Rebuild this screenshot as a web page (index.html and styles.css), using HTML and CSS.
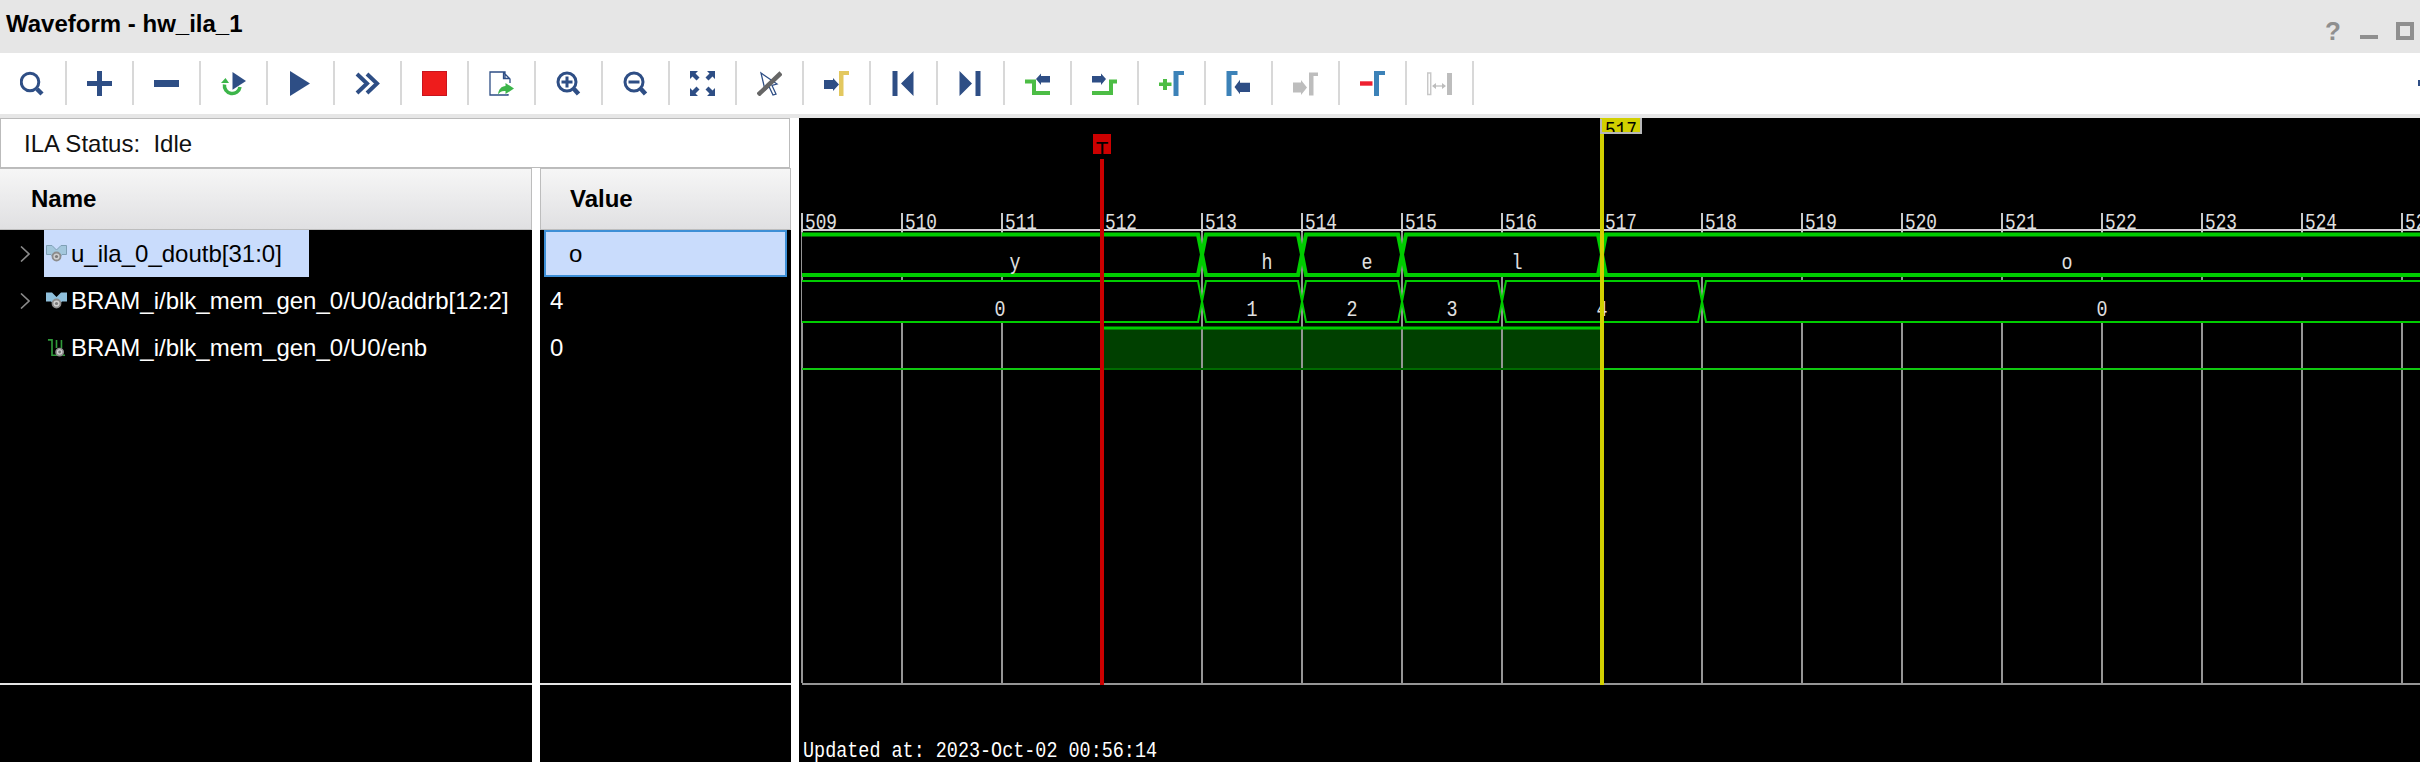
FILE: index.html
```html
<!doctype html>
<html lang="en-us">
  <head>
    <meta charset="utf-8">
    <title>Waveform - hw_ila_1</title>
    <link rel="stylesheet" href="styles.css">
  </head>
  <body>
	<div class="titlebar">
		<span class="title">Waveform - hw_ila_1</span>
		<div class="win-controls">
			<span class="win-help">?</span>
			<span class="win-min"></span>
			<span class="win-max"></span>
		</div>
	</div>

	<div class="toolbar">
		<div class="tool"><svg class="icon" viewBox="0 0 25 25"><circle class="line-blue" cx="10" cy="11" r="8.800"/><path class="line-blue thick" d="M17 18L22 23"/></svg></div>
		<div class="tool"><svg class="icon" viewBox="0 0 25 25"><path class="blue" d="M0 10H10V0H15V10H25V15H15V25H10V15H0z"/></svg></div>
		<div class="tool"><svg class="icon" viewBox="0 0 25 25"><rect class="blue" x="0" y="9" width="25" height="7"/></svg></div>
		<div class="tool"><svg class="icon" viewBox="0 0 25 25"><path class="blue" d="M11.500 1L25 10L11.500 18.700z"/><path class="line-green" d="M3.500 13.500A7.800 7.800 0 1 0 19 16"/><path class="green" d="M0 12L8 12L4.500 7z"/></svg></div>
		<div class="tool"><svg class="icon" viewBox="0 0 25 25"><path class="blue" d="M2 0V25L22 12.500z"/></svg></div>
		<div class="tool"><svg class="icon" viewBox="0 0 25 25"><path class="line-blue chevron" d="M2 3L12 12.500L2 22M12 3L22 12.500L12 22"/></svg></div>
		<div class="tool"><svg class="icon" viewBox="0 0 25 25"><rect class="stop" x="0.500" y="0.500" width="24" height="24"/></svg></div>
		<div class="tool"><svg class="icon" viewBox="0 0 25 25"><path class="line-blue thin" d="M16 7V1H1V24H19V23M14 1L21 8V12M14.500 1.500V7.500H21"/><path class="green" d="M16.500 12L25 17.500L16.500 23V20C12.500 19.500 10.500 21.500 9 23.500C9.500 18.500 12.500 15 16.500 15z"/></svg></div>
		<div class="tool"><svg class="icon" viewBox="0 0 25 25"><circle class="line-blue" cx="11" cy="11" r="9"/><path class="line-blue" d="M5.500 11H16.500M11 5.500V16.500"/><path class="line-blue thick" d="M18 18L22.500 23"/></svg></div>
		<div class="tool"><svg class="icon" viewBox="0 0 25 25"><circle class="line-blue" cx="11" cy="11" r="9"/><path class="line-blue" d="M5.500 11H16.500"/><path class="line-blue thick" d="M18 18L22.500 23"/></svg></div>
		<div class="tool"><svg class="icon" viewBox="0 0 25 25"><path class="blue" d="M0 0H8L5.500 2.500L9.500 6.500L6.500 9.500L2.500 5.500L0 8z"/><path class="blue" d="M25 0V8L22.500 5.500L18.500 9.500L15.500 6.500L19.500 2.500L17 0z"/><path class="blue" d="M25 25H17L19.500 22.500L15.500 18.500L18.500 15.500L22.500 19.500L25 17z"/><path class="blue" d="M0 25V17L2.500 19.500L6.500 15.500L9.500 18.500L5.500 22.500L8 25z"/></svg></div>
		<div class="tool"><svg class="icon" viewBox="0 0 25 25"><path class="line-blue thin" d="M4 2L20 13L15 14.500L19 23L16 24L12 15.500L8 19z"/><path class="line-grey" d="M1 24L24 2"/></svg></div>
		<div class="tool"><svg class="icon" viewBox="0 0 25 25"><path class="blue" d="M0 9H9V7L15 13.500L9 20V18H0z"/><path class="yellow" d="M15 0H25V4H19.500V25H15z"/></svg></div>
		<div class="tool"><svg class="icon" viewBox="0 0 25 25"><path class="blue" d="M1.500 0H6.500V25H1.500zM22.500 0V25L10 12.500z"/></svg></div>
		<div class="tool"><svg class="icon" viewBox="0 0 25 25"><path class="blue" d="M1.500 0V25L14 12.500zM17.500 0H22.500V25H17.500z"/></svg></div>
		<div class="tool"><svg class="icon" viewBox="0 0 25 25"><path class="blue" d="M11 8L16 2.500V5H25V11.500H16V14z"/><path class="line-edge" d="M0 10.500H9V22H25"/></svg></div>
		<div class="tool"><svg class="icon" viewBox="0 0 25 25"><path class="blue" d="M14 8L9 2.500V5H0V11.500H9V14z"/><path class="line-edge" d="M0 22H19V10.500H25"/></svg></div>
		<div class="tool"><svg class="icon" viewBox="0 0 25 25"><path class="edge" d="M4 8H8V11.500H12.500V15H8V19H4V15H0V11.500H4z"/><path class="flag" d="M14.500 0H25V4H19.500V25H14.500z"/></svg></div>
		<div class="tool"><svg class="icon" viewBox="0 0 25 25"><path class="flag" d="M0.500 0H11.500V4H5.500V25H0.500z"/><path class="blue" d="M8.500 16L14 8.700V11.700H24V21H14V23.300z"/></svg></div>
		<div class="tool"><svg class="icon" viewBox="0 0 25 25"><path class="off" d="M0 11.500H8V9L14 16.500L8 24V21.500H0z"/><path class="off" d="M16 1.500H25V5H20.500V24.500H16z"/></svg></div>
		<div class="tool"><svg class="icon" viewBox="0 0 25 25"><rect class="stop-flat" x="0" y="10.300" width="12.500" height="4.400"/><path class="flag" d="M14 0H25V4H19V25H14z"/></svg></div>
		<div class="tool"><svg class="icon" viewBox="0 0 25 25"><rect class="line-off" x="0.700" y="2" width="3" height="21.500"/><rect class="off" x="20" y="2" width="5" height="22"/><path class="line-arrow" d="M6 15H18"/><path class="off" d="M5 15L9 12V18zM19 15L15 12V18z"/></svg></div>
		<span class="tool-more"></span>
	</div>

	<div class="panes">
		<div class="left">
			<div class="status">ILA Status:&nbsp; Idle</div>
			<div class="columns">
				<div class="column names">
					<div class="col-head">Name</div>
					<div class="col-body">
						<div class="row">
							<svg class="chevron-right" viewBox="0 0 10 16"><path d="M1 0.500L9 8L1 15.500"/></svg>
							<div class="name selected">
								<svg class="sig-icon" viewBox="0 0 21 18"><path class="bus-pale" d="M0.500 0.500H6L10.500 5L15 0.500H20.500V9.500H16L10.500 16L5 9.500H0.500z"/><circle class="pin" cx="10.500" cy="11.500" r="4"/><circle class="pin-eye" cx="10.500" cy="11.500" r="1.600"/></svg>
								<span>u_ila_0_doutb[31:0]</span>
							</div>
						</div>
						<div class="row">
							<svg class="chevron-right" viewBox="0 0 10 16"><path d="M1 0.500L9 8L1 15.500"/></svg>
							<div class="name">
								<svg class="sig-icon" viewBox="0 0 21 18"><path class="bus" d="M0 0.500H6L10.500 5L15 0.500H21V9.500H16L10.500 16L5 9.500H0z"/><circle class="pin" cx="10.500" cy="11.500" r="4"/><circle class="pin-eye" cx="10.500" cy="11.500" r="1.600"/></svg>
								<span>BRAM_i/blk_mem_gen_0/U0/addrb[12:2]</span>
							</div>
						</div>
						<div class="row">
							<div class="name no-expand">
								<svg class="sig-icon" viewBox="0 0 21 20"><path class="wire" d="M1 1H5.500V18H13M10.500 1V10M16 1V10M17 18H20"/><circle class="pin" cx="14" cy="14.500" r="4"/><circle class="pin-eye" cx="14" cy="14.500" r="1.600"/></svg>
								<span>BRAM_i/blk_mem_gen_0/U0/enb</span>
							</div>
						</div>
					</div>
					<div class="col-foot"></div>
				</div>
				<div class="column values">
					<div class="col-head">Value</div>
					<div class="col-body">
						<div class="row value selected-cell">o</div>
						<div class="row value">4</div>
						<div class="row value">0</div>
					</div>
					<div class="col-foot"></div>
				</div>
			</div>
		</div>

		<svg class="wave" viewBox="799 118 1621 644">
			<!-- enb high region -->
			<rect class="region" x="1104" y="329" width="496" height="40"/>

			<!-- grid -->
			<path class="grid" d="M802 232V683M902 232V683M1002 232V683M1102 232V683M1202 232V683M1302 232V683M1402 232V683M1502 232V683M1602 232V683M1702 232V683M1802 232V683M1902 232V683M2002 232V683M2102 232V683M2202 232V683M2302 232V683M2402 232V683"/>
			<rect class="grid-base" x="802" y="683" width="1618" height="2"/>

			<!-- ruler -->
			<rect class="ruler" x="802" y="229" width="1618" height="2"/>
			<path class="ruler-ticks" d="M802 213V232M902 213V232M1002 213V232M1202 213V232M1302 213V232M1402 213V232M1502 213V232M1702 213V232M1802 213V232M1902 213V232M2002 213V232M2102 213V232M2202 213V232M2302 213V232M2402 213V232"/>
			<text class="label" x="805" y="229" textLength="32" lengthAdjust="spacingAndGlyphs">509</text>
			<text class="label" x="905" y="229" textLength="32" lengthAdjust="spacingAndGlyphs">510</text>
			<text class="label" x="1005" y="229" textLength="32" lengthAdjust="spacingAndGlyphs">511</text>
			<text class="label" x="1105" y="229" textLength="32" lengthAdjust="spacingAndGlyphs">512</text>
			<text class="label" x="1205" y="229" textLength="32" lengthAdjust="spacingAndGlyphs">513</text>
			<text class="label" x="1305" y="229" textLength="32" lengthAdjust="spacingAndGlyphs">514</text>
			<text class="label" x="1405" y="229" textLength="32" lengthAdjust="spacingAndGlyphs">515</text>
			<text class="label" x="1505" y="229" textLength="32" lengthAdjust="spacingAndGlyphs">516</text>
			<text class="label" x="1605" y="229" textLength="32" lengthAdjust="spacingAndGlyphs">517</text>
			<text class="label" x="1705" y="229" textLength="32" lengthAdjust="spacingAndGlyphs">518</text>
			<text class="label" x="1805" y="229" textLength="32" lengthAdjust="spacingAndGlyphs">519</text>
			<text class="label" x="1905" y="229" textLength="32" lengthAdjust="spacingAndGlyphs">520</text>
			<text class="label" x="2005" y="229" textLength="32" lengthAdjust="spacingAndGlyphs">521</text>
			<text class="label" x="2105" y="229" textLength="32" lengthAdjust="spacingAndGlyphs">522</text>
			<text class="label" x="2205" y="229" textLength="32" lengthAdjust="spacingAndGlyphs">523</text>
			<text class="label" x="2305" y="229" textLength="32" lengthAdjust="spacingAndGlyphs">524</text>
			<text class="label" x="2405" y="229" textLength="32" lengthAdjust="spacingAndGlyphs">525</text>

			<!-- u_ila_0_doutb -->
			<path class="bus-thick" d="M802 234.500H1198L1202 254.500L1198 275H802"/>
			<path class="bus-thick" d="M1202 254.500L1206 234.500H1298L1302 254.500L1298 275H1206z"/>
			<path class="bus-thick" d="M1302 254.500L1306 234.500H1398L1402 254.500L1398 275H1306z"/>
			<path class="bus-thick" d="M1402 254.500L1406 234.500H1598L1602 254.500L1598 275H1406z"/>
			<path class="bus-thick" d="M1602 254.500L1606 234.500H2430V275H1606z"/>
			<text class="label" x="1015" y="269" text-anchor="middle" textLength="11" lengthAdjust="spacingAndGlyphs">y</text>
			<text class="label" x="1267" y="269" text-anchor="middle" textLength="11" lengthAdjust="spacingAndGlyphs">h</text>
			<text class="label" x="1367" y="269" text-anchor="middle" textLength="11" lengthAdjust="spacingAndGlyphs">e</text>
			<text class="label" x="1517" y="269" text-anchor="middle" textLength="11" lengthAdjust="spacingAndGlyphs">l</text>
			<text class="label" x="2067" y="269" text-anchor="middle" textLength="11" lengthAdjust="spacingAndGlyphs">o</text>

			<!-- addrb -->
			<path class="bus-thin" d="M802 281H1198L1202 301.500L1198 322H802"/>
			<path class="bus-thin" d="M1202 301.500L1206 281H1298L1302 301.500L1298 322H1206z"/>
			<path class="bus-thin" d="M1302 301.500L1306 281H1398L1402 301.500L1398 322H1306z"/>
			<path class="bus-thin" d="M1402 301.500L1406 281H1498L1502 301.500L1498 322H1406z"/>
			<path class="bus-thin" d="M1502 301.500L1506 281H1698L1702 301.500L1698 322H1506z"/>
			<path class="bus-thin" d="M1702 301.500L1706 281H2430V322H1706z"/>
			<text class="label" x="1000" y="316" text-anchor="middle" textLength="11" lengthAdjust="spacingAndGlyphs">0</text>
			<text class="label" x="1252" y="316" text-anchor="middle" textLength="11" lengthAdjust="spacingAndGlyphs">1</text>
			<text class="label" x="1352" y="316" text-anchor="middle" textLength="11" lengthAdjust="spacingAndGlyphs">2</text>
			<text class="label" x="1452" y="316" text-anchor="middle" textLength="11" lengthAdjust="spacingAndGlyphs">3</text>
			<text class="label" x="1602" y="316" text-anchor="middle" textLength="11" lengthAdjust="spacingAndGlyphs">4</text>
			<text class="label" x="2102" y="316" text-anchor="middle" textLength="11" lengthAdjust="spacingAndGlyphs">0</text>

			<!-- enb -->
			<path class="sig" d="M802 369H1100M1604 369H2420"/>
			<path class="sig-high" d="M1104 328H1600"/>
			<path class="sig-dim" d="M1104 369H1600"/>

			<!-- trigger marker -->
			<rect class="trigger" x="1100" y="159" width="4" height="526"/>
			<rect class="trigger" x="1093" y="134" width="18" height="20"/>
			<text class="flag-t" x="1102" y="157" text-anchor="middle">T</text>

			<!-- cursor -->
			<rect class="cursor" x="1600" y="134" width="4" height="551"/>
			<rect class="cursor" x="1600" y="118" width="42" height="16"/>
			<text class="flag-cursor" x="1605" y="137" textLength="32" lengthAdjust="spacingAndGlyphs">517</text>
			<path class="cursor-edge" d="M1601 134V119M1641 118V133M1600 133H1642"/>

			<text class="label updated" x="803" y="757" textLength="354" lengthAdjust="spacingAndGlyphs">Updated at: 2023-Oct-02 00:56:14</text>
		</svg>
	</div>
  </body>
</html>
```

FILE: styles.css
```css
html, body
{
	margin: 0;
	padding: 0;
	width: 2420px;
	height: 762px;
	overflow: hidden;
	background-color: #e6e6e6;
	font-family: "Liberation Sans", Arial, sans-serif;
}

.titlebar
{
	height: 53px;
	display: flex;
	align-items: center;
	justify-content: space-between;
	padding: 0 6px;
	box-sizing: border-box;
}

.title
{
	font-size: 24px;
	font-weight: bold;
	color: #000;
	margin-bottom: 5px;
}

.win-controls
{
	display: flex;
	align-items: center;
	gap: 18px;
	color: #8f8f8f;
	margin-top: 9px;
}

.win-help
{
	font-size: 26px;
	font-weight: bold;
	line-height: 18px;
	width: 17px;
}

.win-min
{
	width: 18px;
	height: 4px;
	margin-top: 12px;
	background-color: #8f8f8f;
}

.win-max
{
	width: 18px;
	height: 18px;
	box-sizing: border-box;
	border: 4px solid #8f8f8f;
}

.toolbar
{
	height: 61px;
	box-sizing: border-box;
	padding: 8px 0 9px;
	margin-bottom: 4px;
	background-color: #fff;
	display: flex;
	align-items: stretch;
}

.tool
{
	width: 67px;
	box-sizing: border-box;
	border-right: 2px solid #d8d8d8;
	display: flex;
	align-items: center;
	justify-content: center;
}

.icon
{
	width: 25px;
	height: 25px;
	display: block;
}

.tool-more
{
	margin-left: auto;
	margin-top: 19px;
	width: 2px;
	height: 6px;
	background-color: #2e4e85;
}

.blue { fill: #2e4e85; }
.green { fill: #3cb54a; }
.edge { fill: #4cbd45; }
.flag { fill: #3c82b8; }
.yellow { fill: #e3c85f; }
.off { fill: #bdbdbd; }
.stop { fill: #ee1c1c; stroke: #c8141e; }
.stop-flat { fill: #ee2030; }

.line-blue { fill: none; stroke: #2e4e85; stroke-width: 3; }
.line-blue.thick { stroke-width: 4.5; }
.line-blue.thin { stroke-width: 1.3; }
.line-blue.chevron { stroke-width: 4; }
.line-green { fill: none; stroke: #3cb54a; stroke-width: 3.5; }
.line-edge { fill: none; stroke: #4cbd45; stroke-width: 4; }
.line-grey { fill: none; stroke: #666; stroke-width: 4.5; }
.line-off { fill: none; stroke: #c8c8c8; stroke-width: 1.5; }
.line-arrow { fill: none; stroke: #c8c8c8; stroke-width: 1.5; }

.panes
{
	display: flex;
	height: 644px;
	background-color: #fff;
}

.left
{
	width: 799px;
	flex: none;
	display: flex;
	flex-direction: column;
}

.status
{
	width: 790px;
	height: 50px;
	box-sizing: border-box;
	border: 1px solid #bbb;
	padding-left: 23px;
	font-size: 24px;
	line-height: 49px;
	color: #111;
	background-color: #fff;
}

.columns
{
	flex: 1;
	display: flex;
	gap: 8px;
}

.column
{
	display: flex;
	flex-direction: column;
	background-color: #000;
	color: #fff;
}

.names { width: 532px; }
.values { width: 251px; }

.col-head
{
	height: 62px;
	box-sizing: border-box;
	border: 1px solid #bdbdbd;
	border-left: 0;
	background: linear-gradient(#f6f6f6, #e0e0e2);
	color: #000;
	font-size: 24px;
	font-weight: bold;
	line-height: 60px;
}

.names .col-head { padding-left: 31px; }
.values .col-head { padding-left: 29px; border-left: 1px solid #bdbdbd; }

.col-body
{
	height: 453px;
	border-bottom: 2px solid #e4e4e4;
}

.col-foot
{
	flex: 1;
}

.row
{
	height: 47px;
	display: flex;
	align-items: center;
	font-size: 24px;
}

.chevron-right
{
	width: 10px;
	height: 16px;
	margin-left: 20px;
	flex: none;
}

.chevron-right path
{
	fill: none;
	stroke: #8a8a8a;
	stroke-width: 1.6;
}

.name
{
	height: 100%;
	margin-left: 14px;
	padding-right: 27px;
	display: flex;
	align-items: center;
}

.name.no-expand
{
	margin-left: 44px;
}

.name.selected
{
	background-color: #c9dcfc;
	color: #000;
}

.sig-icon
{
	width: 21px;
	height: 18px;
	margin: 0 4px 0 2px;
	flex: none;
}

.bus-pale { fill: #a3c7dc; stroke: #7f9fb5; stroke-width: 1; }
.bus { fill: #8fc0dc; }
.pin { fill: #d0d0d0; stroke: #8c8c8c; stroke-width: 1.8; }
.pin-eye { fill: #7a7a7a; }
.wire { fill: none; stroke: #2f9a3a; stroke-width: 1.8; }

.value
{
	padding-left: 10px;
	box-sizing: border-box;
}

.selected-cell
{
	margin: 0 4px;
	padding-left: 23px;
	background-color: #c9dcfc;
	border: 2px solid #3d8fd6;
	color: #000;
}

.wave
{
	flex: none;
	width: 1621px;
	height: 644px;
	display: block;
	background-color: #000;
}

.region { fill: #008000; fill-opacity: 0.5; }
.grid { fill: none; stroke: #959595; stroke-width: 2; }
.grid-base { fill: #959595; }
.ruler { fill: #d2d2d2; }
.ruler-ticks { fill: none; stroke: #c8c8c8; stroke-width: 2; }

.label
{
	font-family: "Liberation Mono", monospace;
	font-size: 22px;
	fill: #e0e0e0;
}

.label.updated
{
	fill: #fff;
}

.bus-thick { fill: #000; stroke: #00cc00; stroke-width: 4; }
.bus-thin { fill: #000; stroke: #00cc00; stroke-width: 2; }
.sig { fill: none; stroke: #10c810; stroke-width: 2; }
.sig-high { fill: none; stroke: #00cc00; stroke-width: 3; }
.sig-dim { fill: none; stroke: #006a00; stroke-width: 2; }

.trigger { fill: #cc0000; }
.cursor { fill: #d2d000; }
.cursor-edge { fill: none; stroke: #b8b8b8; stroke-width: 2; }

.flag-t
{
	font-family: "Liberation Mono", monospace;
	font-size: 22px;
	fill: #000;
}

.flag-cursor
{
	font-family: "Liberation Mono", monospace;
	font-size: 22px;
	fill: #000;
}
```
